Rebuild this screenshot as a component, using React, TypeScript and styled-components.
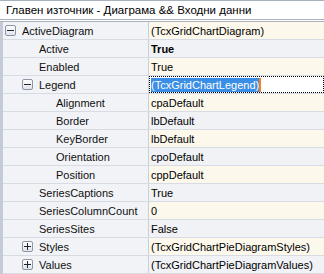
import styled, { createGlobalStyle } from 'styled-components';

const Global = createGlobalStyle`
  html, body { margin: 0; padding: 0; background: #ffffff; }
  body { font-family: Tahoma, "Liberation Sans", Arial, sans-serif; font-size: 11px; }
`;

const Frame = styled.div`
  width: 324px;
  height: 274px;
  overflow: hidden;
  background: #f0f2f5;
`;

const TitleBar = styled.div`
  height: 18px;
  border-top: 1px solid #a9b1bf;
  border-bottom: 3px double #a9b1bf;
  background: #ffffff;
  color: #000;
  padding-left: 6px;
  line-height: 19px;
  font-size: 11.5px;
  white-space: nowrap;
`;

const Tree = styled.div`
  border-left: 3px solid #c4cbd6;
`;

const Row = styled.div`
  display: grid;
  grid-template-columns: 146px 1fr;
  height: 18px;
  border-bottom: 1px solid #d6dbe4;
  box-sizing: border-box;
`;

const Label = styled.div<{ $level: number }>`
  display: flex;
  align-items: center;
  padding-left: ${p => 2 + p.$level * 17}px;
  background: #f2f3f6;
  border-right: 1px solid #c9cfda;
  white-space: nowrap;
  color: #101010;
`;

const Expander = styled.span`
  width: 11px;
  height: 11px;
  box-sizing: border-box;
  border: 1px solid #8c96a6;
  border-radius: 2px;
  background: linear-gradient(#ffffff, #dfe3ea);
  margin-right: 6px;
  display: inline-flex;
  align-items: center;
  justify-content: center;
  flex-shrink: 0;
`;

const Spacer = styled.span`
  width: 17px;
  flex-shrink: 0;
`;

const Value = styled.div<{ $odd: boolean; $bold?: boolean; $selected?: boolean }>`
  display: flex;
  align-items: center;
  padding-left: 2px;
  background: ${p => (p.$odd ? '#f1f2f5' : '#fdf8ec')};
  font-weight: ${p => (p.$bold ? 'bold' : 'normal')};
  white-space: nowrap;
  overflow: hidden;
  color: #000;
  ${p => p.$selected && `
    background: #ffffff;
    outline: 1px dotted #000;
    outline-offset: -1px;
  `}
`;

const Highlight = styled.span`
  background: #3a8ee6;
  color: #ffffff;
  border-right: 2px solid #f08020;
  line-height: 14px;
`;

type Item = {
  name: string;
  value: string;
  level: number;
  expand?: '+' | '-';
  bold?: boolean;
  selected?: boolean;
};

const items: Item[] = [
  { name: 'ActiveDiagram', value: '(TcxGridChartDiagram)', level: 0, expand: '-' },
  { name: 'Active', value: 'True', level: 1, bold: true },
  { name: 'Enabled', value: 'True', level: 1 },
  { name: 'Legend', value: '(TcxGridChartLegend)', level: 1, expand: '-', selected: true },
  { name: 'Alignment', value: 'cpaDefault', level: 2 },
  { name: 'Border', value: 'lbDefault', level: 2 },
  { name: 'KeyBorder', value: 'lbDefault', level: 2 },
  { name: 'Orientation', value: 'cpoDefault', level: 2 },
  { name: 'Position', value: 'cppDefault', level: 2 },
  { name: 'SeriesCaptions', value: 'True', level: 1 },
  { name: 'SeriesColumnCount', value: '0', level: 1 },
  { name: 'SeriesSites', value: 'False', level: 1 },
  { name: 'Styles', value: '(TcxGridChartPieDiagramStyles)', level: 1, expand: '+' },
  { name: 'Values', value: '(TcxGridChartPieDiagramValues)', level: 1, expand: '+' },
];

function Sign({ kind }: { kind: '+' | '-' }) {
  return (
    <svg width="7" height="7" viewBox="0 0 7 7">
      <rect x="0" y="3" width="7" height="1" fill="#1e2630" />
      {kind === '+' && <rect x="3" y="0" width="1" height="7" fill="#1e2630" />}
    </svg>
  );
}

export default function App() {
  return (
    <Frame>
      <Global />
      <TitleBar>Главен източник - Диаграма &amp;&amp; Входни данни</TitleBar>
      <Tree>
        {items.map((it, i) => (
          <Row key={it.name}>
            <Label $level={it.level}>
              {it.expand ? (
                <Expander><Sign kind={it.expand} /></Expander>
              ) : (
                <Spacer />
              )}
              {it.name}
            </Label>
            <Value $odd={i % 2 === 1} $bold={it.bold} $selected={it.selected}>
              {it.selected ? <Highlight>{it.value}</Highlight> : it.value}
            </Value>
          </Row>
        ))}
      </Tree>
    </Frame>
  );
}
